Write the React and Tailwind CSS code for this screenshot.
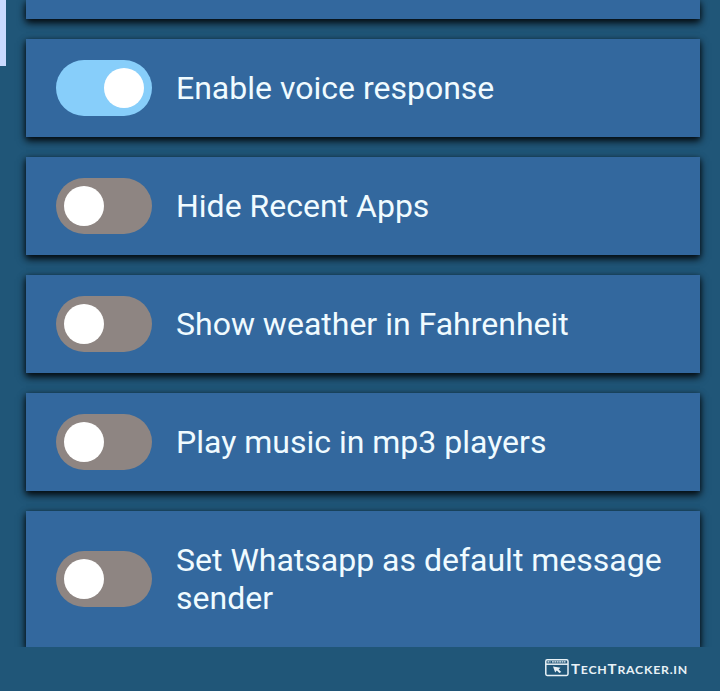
const settings = [
  { label: 'Enable voice response', on: true },
  { label: 'Hide Recent Apps', on: false },
  { label: 'Show weather in Fahrenheit', on: false },
  { label: 'Play music in mp3 players', on: false },
];

const cardClass =
  'shrink-0 flex items-center bg-[#33689e] pl-[30px] gap-6 shadow-[0_4px_8px_rgba(0,0,0,0.7),0_2px_6px_rgba(0,0,0,0.65)]';

function Toggle({ on }) {
  return (
    <span
      role="switch"
      aria-checked={on}
      className={`flex h-14 w-24 shrink-0 items-center rounded-full p-2 ${
        on ? 'justify-end bg-[#87cefa]' : 'justify-start bg-[#8e8582]'
      }`}
    >
      <span className="size-10 rounded-full bg-white" />
    </span>
  );
}

function Label({ children }) {
  return <span className="text-[32px] leading-[38px] text-[#f0fbff]">{children}</span>;
}

function Brand() {
  return (
    <div className="flex items-start text-[#e8f1f6]">
      <svg width="24" height="18" viewBox="0 0 24 18" fill="none">
        <rect x="0.8" y="0.8" width="22.2" height="15.6" rx="1.4" stroke="currentColor" strokeWidth="1.5" />
        <path d="M1 5.2h22" stroke="currentColor" strokeWidth="1.5" />
        <path d="M2.5 2.9h3M7 2.9h13.5" stroke="currentColor" strokeWidth="1.2" strokeDasharray="1.8 .6" />
        <path d="m8 7.6 7.5 1.2-1.9 1.6 2.7 2.7-2 .9-2.5-2.4-1.6 2z" fill="currentColor" />
      </svg>
      <svg width="118" height="22" viewBox="0 0 118 22" className="ml-[2px]" fill="currentColor" fontFamily="Lato, sans-serif" fontWeight="700">
        <text x="0" y="14.6" fontSize="11" letterSpacing="0.7" textLength="117" lengthAdjust="spacingAndGlyphs">
          <tspan fontSize="13.5">T</tspan>ECH<tspan fontSize="13.5">T</tspan>RACKER.IN
        </text>
      </svg>
    </div>
  );
}

export default function App() {
  return (
    <main className="flex h-[691px] w-[720px] flex-col overflow-hidden bg-[#205678] font-[Roboto,sans-serif]">
      <div className="flex h-[647px] shrink-0 overflow-hidden">
        <div className="h-[66px] w-[6px] shrink-0 bg-[#cadaff]" />
        <div className="ml-5 flex w-[674px] flex-col gap-5">
          <div className="h-[19px] shrink-0 bg-[#33689e] shadow-[0_4px_8px_rgba(0,0,0,0.7),0_2px_6px_rgba(0,0,0,0.65)]" />
          {settings.map(({ label, on }) => (
            <section key={label} className={`${cardClass} h-[98px]`}>
              <Toggle on={on} />
              <Label>{label}</Label>
            </section>
          ))}
          <section className={`${cardClass} h-[136px]`}>
            <Toggle on={false} />
            <Label>
              Set Whatsapp as default message
              <br />
              sender
            </Label>
          </section>
        </div>
      </div>
      <footer className="flex h-11 pl-[545px] pt-3">
        <Brand />
      </footer>
    </main>
  );
}
